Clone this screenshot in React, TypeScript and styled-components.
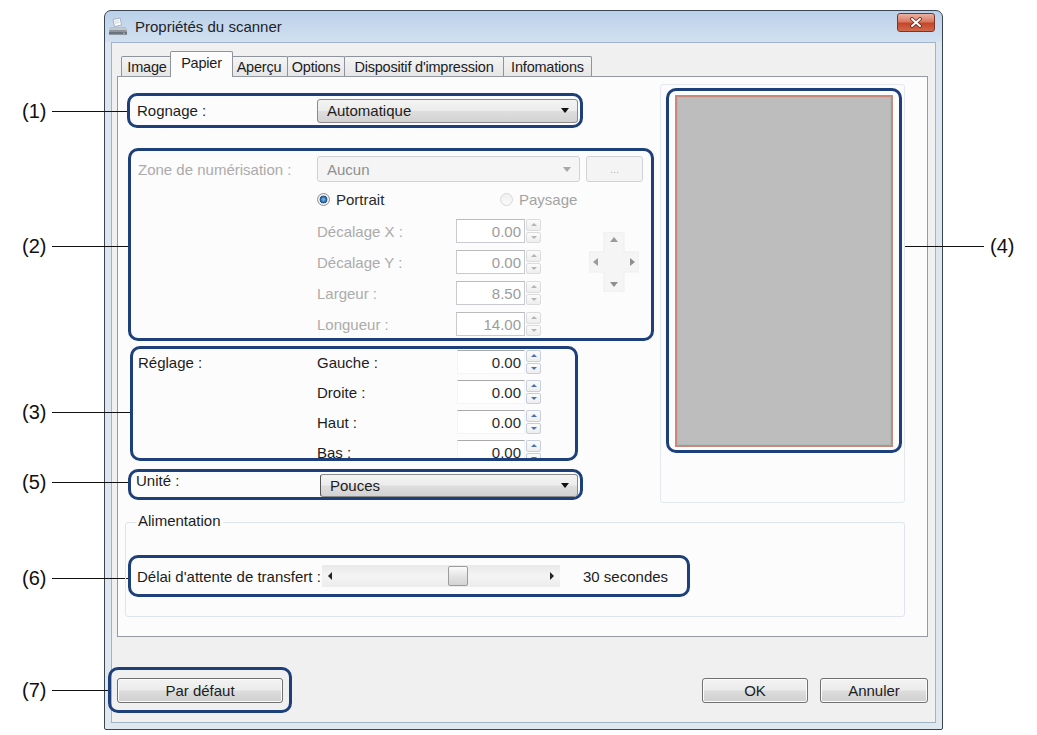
import React from 'react';
import styled, { createGlobalStyle } from 'styled-components';

const GlobalStyle = createGlobalStyle`
  * { box-sizing: border-box; }
  html, body { margin: 0; padding: 0; background: #ffffff; }
  body {
    font-family: "Liberation Sans", Arial, sans-serif;
    font-size: 15px;
    color: #1c1c1c;
  }
`;

const Page = styled.div`
  position: relative;
  width: 1037px;
  height: 735px;
  overflow: hidden;
  padding-top: 10px;
`;

// callout numbers outside the dialog
const Note = styled.div<{ $top: number; $left: number }>`
  position: absolute;
  top: ${(p) => p.$top}px;
  left: ${(p) => p.$left}px;
  display: flex;
  align-items: center;
  gap: 6px;
  font-size: 20px;
  line-height: 22px;
  color: #111;
  transform: translateY(-50%);
`;

const NoteLine = styled.span<{ $w: number }>`
  display: block;
  width: ${(p) => p.$w}px;
  height: 1px;
  background: #111;
`;

const Window = styled.div`
  margin-left: 104px;
  width: 839px;
  height: 720px;
  border: 1px solid #3b4452;
  border-radius: 7px 7px 2px 2px;
  background: linear-gradient(#bad0e9 0, #d2e1f1 31px, #dce6f0 31px, #dfe7ef 100%);
  padding: 0 6px 6px;
  display: flex;
  flex-direction: column;
`;

const TitleBar = styled.div`
  height: 31px;
  display: flex;
  align-items: center;
  margin-left: -3px;
`;

const TitleText = styled.span`
  margin-left: 7px;
  font-size: 15px;
  color: #1e2328;
  flex: 1;
`;

const CloseButton = styled.div`
  width: 38px;
  height: 19px;
  margin: -8px 1px 0 0;
  border: 1px solid #7d3526;
  border-radius: 3px;
  background: linear-gradient(#eab3a3 0%, #d9785f 45%, #c4462a 55%, #d16a4c 100%);
  display: flex;
  align-items: center;
  justify-content: center;
`;

const Client = styled.div`
  flex: 1;
  border: 1px solid #a3b3c6;
  background: #f0f0f0;
  padding: 8px 7px 9px 5px;
  display: flex;
  flex-direction: column;
`;

const TabStrip = styled.div`
  height: 25px;
  display: flex;
  align-items: flex-end;
  padding-left: 4px;
  position: relative;
  z-index: 2;
`;

const Tab = styled.div<{ $w: number; $active?: boolean }>`
  width: ${(p) => p.$w}px;
  height: ${(p) => (p.$active ? 26 : 20)}px;
  margin: ${(p) => (p.$active ? '0 -3px -1px -2px' : '0 -1px 0 0')};
  padding-bottom: ${(p) => (p.$active ? 3 : 0)}px;
  border: 1px solid #8e939c;
  border-bottom: none;
  border-radius: 2px 2px 0 0;
  background: ${(p) => (p.$active ? '#fcfcfc' : 'linear-gradient(#f4f4f4, #e6e6e6)')};
  position: relative;
  z-index: ${(p) => (p.$active ? 2 : 1)};
  display: flex;
  align-items: center;
  justify-content: center;
  font-size: 14.5px;
  letter-spacing: -0.2px;
  color: #1c1c1c;
  white-space: nowrap;
`;

const Panel = styled.div`
  height: 561px;
  border: 1px solid #959aa2;
  background: #fcfcfc;
  display: flex;
  flex-direction: column;
`;

const TopArea = styled.div`
  display: flex;
  align-items: flex-start;
  padding-left: 9px;
`;

const LeftCol = styled.div`
  width: 528px;
  display: flex;
  flex-direction: column;
  align-items: flex-start;
`;

const RightCol = styled.div`
  margin-left: 5px;
`;

const Callout = styled.div<{ $w: number; $h: number; $mt?: number; $ml?: number }>`
  width: ${(p) => p.$w}px;
  height: ${(p) => p.$h}px;
  margin-top: ${(p) => p.$mt ?? 0}px;
  margin-left: ${(p) => p.$ml ?? 0}px;
  border: 3px solid #1d3f7a;
  border-radius: 10px;
  overflow: hidden;
`;

const InlineCallout = styled(Callout)`
  display: flex;
  align-items: center;
  padding-left: 7px;
`;

const StackCallout = styled(Callout)<{ $pt: number; $pl: number }>`
  display: flex;
  flex-direction: column;
  padding: ${(p) => p.$pt}px 0 0 ${(p) => p.$pl}px;
`;

const Label = styled.span<{ $w?: number; $off?: boolean }>`
  width: ${(p) => (p.$w ? `${p.$w}px` : 'auto')};
  flex-shrink: 0;
  line-height: 17px;
  color: ${(p) => (p.$off ? '#ababab' : '#1c1c1c')};
  white-space: nowrap;
`;

const Select = styled.div<{ $w: number; $h: number; $off?: boolean }>`
  width: ${(p) => p.$w}px;
  height: ${(p) => p.$h}px;
  display: flex;
  align-items: center;
  justify-content: space-between;
  padding: 0 8px 0 9px;
  border: 1px solid ${(p) => (p.$off ? '#cfd1d6' : '#8a8a8a')};
  border-radius: 3px;
  background: ${(p) =>
    p.$off ? '#f5f5f5' : 'linear-gradient(#f4f4f4, #ececec 48%, #dedede 52%, #d2d2d2)'};
  color: ${(p) => (p.$off ? '#8f8f8f' : '#1c1c1c')};
`;

const Caret = styled.span<{ $off?: boolean }>`
  width: 0;
  height: 0;
  border-left: 4px solid transparent;
  border-right: 4px solid transparent;
  border-top: 5px solid ${(p) => (p.$off ? '#a8a8a8' : '#111')};
`;

const Row = styled.div<{ $mt?: number; $ml?: number; $h?: number; $top?: boolean }>`
  display: flex;
  align-items: ${(p) => (p.$top ? 'flex-start' : 'center')};
  margin-top: ${(p) => p.$mt ?? 0}px;
  margin-left: ${(p) => p.$ml ?? 0}px;
  height: ${(p) => (p.$h ? `${p.$h}px` : 'auto')};
`;

const SmallButton = styled.div`
  width: 57px;
  height: 26px;
  margin-left: 6px;
  border: 1px solid #d0d2d6;
  border-radius: 3px;
  background: #f4f4f4;
  color: #b5b5b5;
  display: flex;
  align-items: center;
  justify-content: center;
  font-size: 11px;
`;

const RadioOption = styled.div<{ $w?: number; $off?: boolean }>`
  width: ${(p) => (p.$w ? `${p.$w}px` : 'auto')};
  display: flex;
  align-items: center;
  gap: 6px;
  color: ${(p) => (p.$off ? '#a3a3a3' : '#2a2a2a')};
`;

const RadioCircle = styled.span<{ $on?: boolean }>`
  width: 13px;
  height: 13px;
  border-radius: 50%;
  border: 1px solid ${(p) => (p.$on ? '#8e8f8f' : '#d6d6d6')};
  background: ${(p) =>
    p.$on
      ? 'radial-gradient(circle, #86c4ee 0, #2e6fb2 2.6px, #1f4f8a 3.6px, #e8e8e8 4.2px, #fafafa 6px)'
      : 'linear-gradient(#f0f0f0, #fafafa)'};
`;

const SpinArea = styled.div`
  display: flex;
  align-items: flex-start;
  margin-top: 11px;
`;

const SpinList = styled.div<{ $gap: number; $ml?: number }>`
  display: flex;
  flex-direction: column;
  gap: ${(p) => p.$gap}px;
  margin-left: ${(p) => p.$ml ?? 0}px;
`;

const SpinInput = styled.div<{ $w: number; $off?: boolean; $flat?: boolean }>`
  width: ${(p) => p.$w}px;
  height: 24px;
  padding-right: 3px;
  display: flex;
  align-items: center;
  justify-content: flex-end;
  background: #ffffff;
  border: 1px solid ${(p) => (p.$flat ? '#f3f4f6' : p.$off ? '#c8cacf' : '#abadb3')};
  border-top-color: ${(p) => (p.$flat ? '#a9a9a9' : p.$off ? '#b9bbbf' : '#abadb3')};
  color: ${(p) => (p.$off ? '#9c9c9c' : '#2b2b2b')};
  font-size: 15px;
`;

const Spinner = styled.div`
  width: 15px;
  height: 24px;
  margin-left: 1px;
  display: flex;
  flex-direction: column;
  gap: 1px;
`;

const SpinBtn = styled.div<{ $down?: boolean; $off?: boolean }>`
  flex: 1;
  border: 1px solid ${(p) => (p.$off ? '#dcdcdc' : '#c6cfdb')};
  border-radius: 2px;
  background: linear-gradient(#fbfbfb, #eeeeee);
  display: flex;
  align-items: center;
  justify-content: center;
  &::after {
    content: '';
    border-left: 3px solid transparent;
    border-right: 3px solid transparent;
    ${(p) => (p.$down ? 'border-top' : 'border-bottom')}: 3px solid
      ${(p) => (p.$off ? '#b5b5b5' : '#4b72b0')};
  }
`;

const PadWrap = styled.div`
  margin: 13px 0 0 48px;
`;

const PreviewGroup = styled.div`
  margin-top: 7px;
  width: 245px;
  height: 419px;
  border: 1px solid #e4e9ef;
  border-radius: 3px;
  padding: 3px 0 0 5px;
`;

const Preview = styled.div`
  width: 218px;
  height: 352px;
  margin: 4px 0 0 6px;
  background: #bdbdbd;
  border: 2px solid #c9887c;
  box-shadow: inset 0 0 0 1px #a9bcb8;
`;

const GroupBox = styled.div`
  position: relative;
  margin: 19px 0 0 7px;
  width: 780px;
  height: 95px;
  border: 1px solid #dfe5ec;
  border-radius: 3px;
  padding: 32px 0 0 2px;
`;

const Legend = styled.span`
  position: absolute;
  top: -11px;
  left: 10px;
  padding: 0 2px;
  background: #fcfcfc;
  line-height: 17px;
`;

const ScrollBar = styled.div`
  width: 238px;
  height: 22px;
  display: flex;
  align-items: center;
  justify-content: space-between;
  padding: 0 4px;
  background: linear-gradient(#e9e9e9, #f4f4f4 50%, #ececec);
`;

const ScrollArrow = styled.span<{ $right?: boolean }>`
  width: 0;
  height: 0;
  border-top: 4px solid transparent;
  border-bottom: 4px solid transparent;
  ${(p) => (p.$right ? 'border-left' : 'border-right')}: 4px solid #222;
  margin: 0 2px;
`;

const Thumb = styled.span`
  width: 20px;
  height: 20px;
  margin-left: 114px;
  margin-right: auto;
  border: 1px solid #9c9c9c;
  border-radius: 2px;
  background: linear-gradient(#fbfbfb, #e2e2e2 55%, #d4d4d4);
`;

const ButtonRow = styled.div`
  margin-top: 30px;
  height: 46px;
  display: flex;
  align-items: center;
  justify-content: space-between;
`;

const ButtonCallout = styled(Callout)`
  display: flex;
  align-items: center;
  justify-content: center;
  overflow: visible;
`;

const ButtonGroup = styled.div`
  display: flex;
  gap: 12px;
`;

const PushButton = styled.div<{ $w: number }>`
  width: ${(p) => p.$w}px;
  height: 25px;
  border: 1px solid #707070;
  border-radius: 3px;
  background: linear-gradient(#f3f3f3, #ebebeb 48%, #dddddd 52%, #cfcfcf);
  box-shadow: inset 0 0 0 1px #fcfcfc;
  display: flex;
  align-items: center;
  justify-content: center;
  color: #1c1c1c;
`;

const ScannerIcon = () => (
  <svg width="20" height="20" viewBox="0 0 20 20">
    <path d="M5 2.5l7-1.5 1.6 7-7 1.5z" fill="#fdfdfd" stroke="#9aa3ad" strokeWidth="0.8" />
    <path d="M6.5 4.5l4.5-1M7 6.3l4.5-1" stroke="#b7c6d6" strokeWidth="0.7" />
    <path d="M2 10.5h16l1 4.5v2.5H1V15z" fill="#8d949e" />
    <path d="M2 10.5h16l0.6 2.6H1.4z" fill="#c3c8cf" />
    <path d="M1 15h18v2.5H1z" fill="#6b727c" />
    <circle cx="16" cy="16.2" r="0.8" fill="#9be07a" />
  </svg>
);

const CloseGlyph = () => (
  <svg width="14" height="11" viewBox="0 0 14 11">
    <path d="M3 2l8 7M11 2l-8 7" stroke="#5b2a20" strokeWidth="3.6" strokeLinecap="round" />
    <path d="M3 2l8 7M11 2l-8 7" stroke="#ffffff" strokeWidth="2" strokeLinecap="round" />
  </svg>
);

const ArrowPad = () => (
  <svg width="50" height="60" viewBox="0 0 50 60">
    <path d="M15 0h20v20h15v20H35v20H15V40H0V20h15z" fill="#f5f5f5" stroke="#eeeeee" />
    <path d="M25 5l-4 5h8z" fill="#9b9b9b" />
    <path d="M25 55l-4-5h8z" fill="#8f8f8f" />
    <path d="M4 30l5-4v8z" fill="#9b9b9b" />
    <path d="M46 30l-5-4v8z" fill="#8f8f8f" />
  </svg>
);

type SpinProps = { label: string; value: string; labelW: number; inputW: number; off?: boolean; flat?: boolean };

const SpinField = ({ label, value, labelW, inputW, off, flat }: SpinProps) => (
  <Row>
    <Label $w={labelW} $off={off}>
      {label}
    </Label>
    <SpinInput $w={inputW} $off={off} $flat={flat}>
      {value}
    </SpinInput>
    <Spinner>
      <SpinBtn $off={off} />
      <SpinBtn $off={off} $down />
    </Spinner>
  </Row>
);

const tabs = [
  { name: 'Image', w: 52 },
  { name: 'Papier', w: 63, active: true },
  { name: 'Aperçu', w: 58 },
  { name: 'Options', w: 58 },
  { name: "Dispositif d'impression", w: 160 },
  { name: 'Infomations', w: 89 },
];

const zoneFields = [
  { label: 'Décalage X :', value: '0.00' },
  { label: 'Décalage Y :', value: '0.00' },
  { label: 'Largeur :', value: '8.50' },
  { label: 'Longueur :', value: '14.00' },
];

const marginFields = ['Gauche :', 'Droite :', 'Haut :', 'Bas :'];

const notes = [
  { n: '(1)', top: 111, line: 75 },
  { n: '(2)', top: 246, line: 76 },
  { n: '(3)', top: 412, line: 78 },
  { n: '(5)', top: 482, line: 76 },
  { n: '(6)', top: 578, line: 76 },
  { n: '(7)', top: 690, line: 56 },
];

const App = () => {
  return (
    <Page>
      <GlobalStyle />
      {notes.map((note) => (
        <Note key={note.n} $top={note.top} $left={22}>
          {note.n}
          <NoteLine $w={note.line} />
        </Note>
      ))}
      <Note $top={246} $left={905}>
        <NoteLine $w={79} />
        (4)
      </Note>

      <Window>
        <TitleBar>
          <ScannerIcon />
          <TitleText>Propriétés du scanner</TitleText>
          <CloseButton>
            <CloseGlyph />
          </CloseButton>
        </TitleBar>

        <Client>
          <TabStrip>
            {tabs.map((tab) => (
              <Tab key={tab.name} $w={tab.w} $active={tab.active}>
                {tab.name}
              </Tab>
            ))}
          </TabStrip>

          <Panel>
            <TopArea>
              <LeftCol>
                <InlineCallout $w={456} $h={35} $mt={16}>
                  <Label $w={180}>Rognage :</Label>
                  <Select $w={261} $h={24}>
                    Automatique
                    <Caret />
                  </Select>
                </InlineCallout>

                <StackCallout $w={526} $h={193} $mt={20} $ml={1} $pt={5} $pl={7}>
                  <Row $h={26}>
                    <Label $w={179} $off>
                      Zone de numérisation :
                    </Label>
                    <Select $w={263} $h={26} $off>
                      Aucun
                      <Caret $off />
                    </Select>
                    <SmallButton>...</SmallButton>
                  </Row>
                  <Row $mt={8} $ml={179} $h={18}>
                    <RadioOption $w={183}>
                      <RadioCircle $on />
                      Portrait
                    </RadioOption>
                    <RadioOption $off>
                      <RadioCircle />
                      Paysage
                    </RadioOption>
                  </Row>
                  <SpinArea>
                    <SpinList $gap={7} $ml={179}>
                      {zoneFields.map((f) => (
                        <SpinField key={f.label} label={f.label} value={f.value} labelW={139} inputW={69} off />
                      ))}
                    </SpinList>
                    <PadWrap>
                      <ArrowPad />
                    </PadWrap>
                  </SpinArea>
                </StackCallout>

                <StackCallout $w={448} $h={115} $mt={5} $ml={3} $pt={1} $pl={5}>
                  <Row $top>
                    <Label $w={179} style={{ marginTop: 4 }}>
                      Réglage :
                    </Label>
                    <SpinList $gap={6}>
                      {marginFields.map((f) => (
                        <SpinField key={f} label={f} value="0.00" labelW={140} inputW={68} flat />
                      ))}
                    </SpinList>
                  </Row>
                </StackCallout>

                <StackCallout $w={455} $h={31} $mt={8} $ml={1} $pt={0} $pl={5}>
                  <Row $top>
                    <Label $w={184}>Unité :</Label>
                    <Select $w={258} $h={23} style={{ marginTop: 2, borderLeftColor: '#555' }}>
                      Pouces
                      <Caret />
                    </Select>
                  </Row>
                </StackCallout>
              </LeftCol>

              <RightCol>
                <PreviewGroup>
                  <Callout $w={236} $h={365}>
                    <Preview />
                  </Callout>
                </PreviewGroup>
              </RightCol>
            </TopArea>

            <GroupBox>
              <Legend>Alimentation</Legend>
              <InlineCallout $w={562} $h={42} style={{ paddingLeft: 6 }}>
                <Label $w={185}>Délai d'attente de transfert :</Label>
                <ScrollBar>
                  <ScrollArrow />
                  <Thumb />
                  <ScrollArrow $right />
                </ScrollBar>
                <Label style={{ marginLeft: 23 }}>30 secondes</Label>
              </InlineCallout>
            </GroupBox>
          </Panel>

          <ButtonRow>
            <ButtonCallout $w={184} $h={46} $ml={-9}>
              <PushButton $w={166}>Par défaut</PushButton>
            </ButtonCallout>
            <ButtonGroup>
              <PushButton $w={106}>OK</PushButton>
              <PushButton $w={108}>Annuler</PushButton>
            </ButtonGroup>
          </ButtonRow>
        </Client>
      </Window>
    </Page>
  );
};

export default App;
